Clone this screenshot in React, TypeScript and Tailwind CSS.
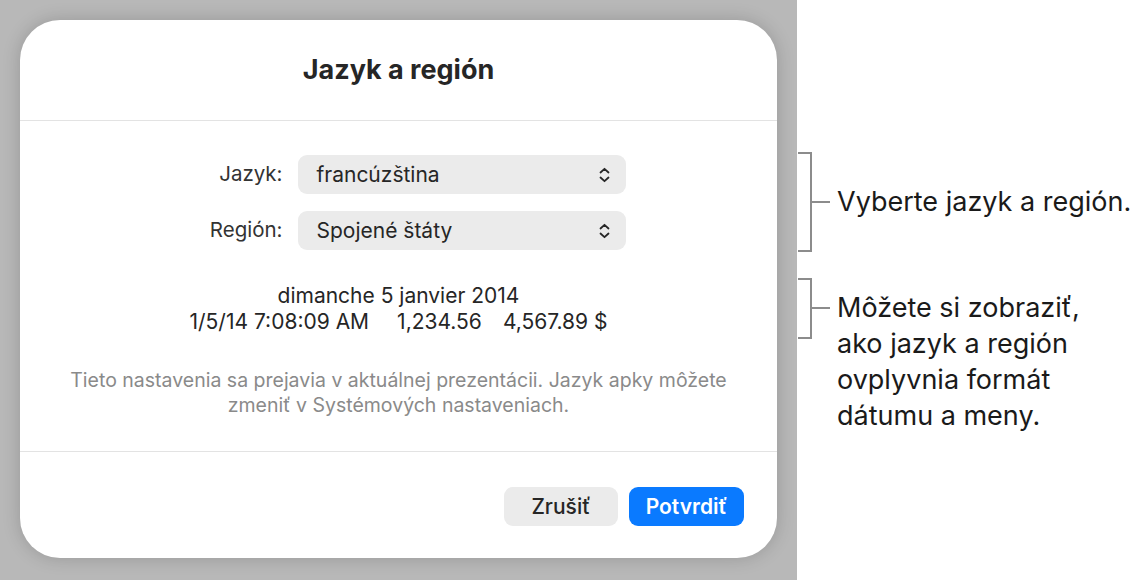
import type { ReactNode } from "react";

const sans = "font-['Inter','Liberation_Sans',sans-serif]";

function UpDown() {
  return (
    <svg className="h-[16px] w-[11px]" viewBox="0 0 11 16" fill="none">
      <path
        d="M1.5 5.5 5.5 1.8l4 3.7M1.5 10.5l4 3.7 4-3.7"
        stroke="#262626"
        strokeWidth="1.8"
        strokeLinecap="round"
        strokeLinejoin="round"
      />
    </svg>
  );
}

function SelectRow({ label, value }: { label: string; value: string }) {
  return (
    <>
      <span className="text-right text-[20.5px] text-[#333]">{label}</span>
      <div className="flex h-[39px] items-center justify-between rounded-[9px] bg-[#ebebeb] pl-[19px] pr-[16px] text-[21px] text-[#262626]">
        <span>{value}</span>
        <UpDown />
      </div>
    </>
  );
}

function Callout({
  height,
  tickTop,
  children,
}: {
  height: number;
  tickTop: string;
  children: ReactNode;
}) {
  return (
    <div className="flex items-start">
      <div
        className="w-[14px] shrink-0 border-y-2 border-r-2 border-[#8c8c8c]"
        style={{ height }}
      />
      <div className={`h-[2px] w-[18px] shrink-0 bg-[#8c8c8c] ${tickTop}`} />
      <div className="ml-[7px]">{children}</div>
    </div>
  );
}

export default function App() {
  return (
    <div className={`flex h-[580px] w-[1136px] bg-white ${sans}`}>
      {/* dimmed window behind the sheet */}
      <div className="w-[797px] shrink-0 bg-[#b8b8b8] p-[20px]">
        <div className="flex h-[538px] flex-col rounded-[40px] bg-white shadow-[0_0_18px_rgba(0,0,0,0.18)]">
          <div className="flex h-[100px] items-center justify-center">
            <h2 className="text-[27px] font-bold text-[#262626]">Jazyk a región</h2>
          </div>
          <div className="h-px bg-[#e3e3e3]" />

          <div className="flex h-[330px] flex-col items-center pt-[34px]">
            <div className="grid grid-cols-[111px_328px] items-center gap-x-[15px] gap-y-[17px]">
              <SelectRow label="Jazyk:" value="francúzština" />
              <SelectRow label="Región:" value="Spojené štáty" />
            </div>

            <div className="mt-[33px] flex flex-col items-center text-[21px] leading-[26px] text-[#262626]">
              <span>dimanche 5 janvier 2014</span>
              <div className="flex">
                <span>1/5/14 7:08:09 AM</span>
                <span className="ml-[28px]">1,234.56</span>
                <span className="ml-[21px]">4,567.89 $</span>
              </div>
            </div>

            <p className="mt-[33px] text-center text-[19.5px] leading-[25px] text-[#8a8a8a]">
              Tieto nastavenia sa prejavia v aktuálnej prezentácii. Jazyk apky môžete
              <br />
              zmeniť v Systémových nastaveniach.
            </p>
          </div>

          <div className="h-px bg-[#e3e3e3]" />
          <div className="flex flex-1 items-start justify-end gap-[11px] pr-[33px] pt-[35px]">
            <button className="h-[39px] w-[114px] rounded-[9px] bg-[#ebebeb] text-[21px] font-medium text-[#262626]">
              Zrušiť
            </button>
            <button className="h-[39px] w-[115px] rounded-[9px] bg-[#0a7aff] text-[21px] font-semibold text-white">
              Potvrdiť
            </button>
          </div>
        </div>
      </div>

      {/* callouts */}
      <div className="flex flex-col pl-[1px] pt-[152px] text-[27px] leading-[36px] text-[#1a1a1a]">
        <Callout height={100} tickTop="mt-[49px]">
          <p className="mt-[32px]">Vyberte jazyk a región.</p>
        </Callout>
        <div className="mt-[26px]">
          <Callout height={61} tickTop="mt-[29px]">
            <p className="mt-[12px]">
              Môžete si zobraziť,
              <br />
              ako jazyk a región
              <br />
              ovplyvnia formát
              <br />
              dátumu a meny.
            </p>
          </Callout>
        </div>
      </div>
    </div>
  );
}
